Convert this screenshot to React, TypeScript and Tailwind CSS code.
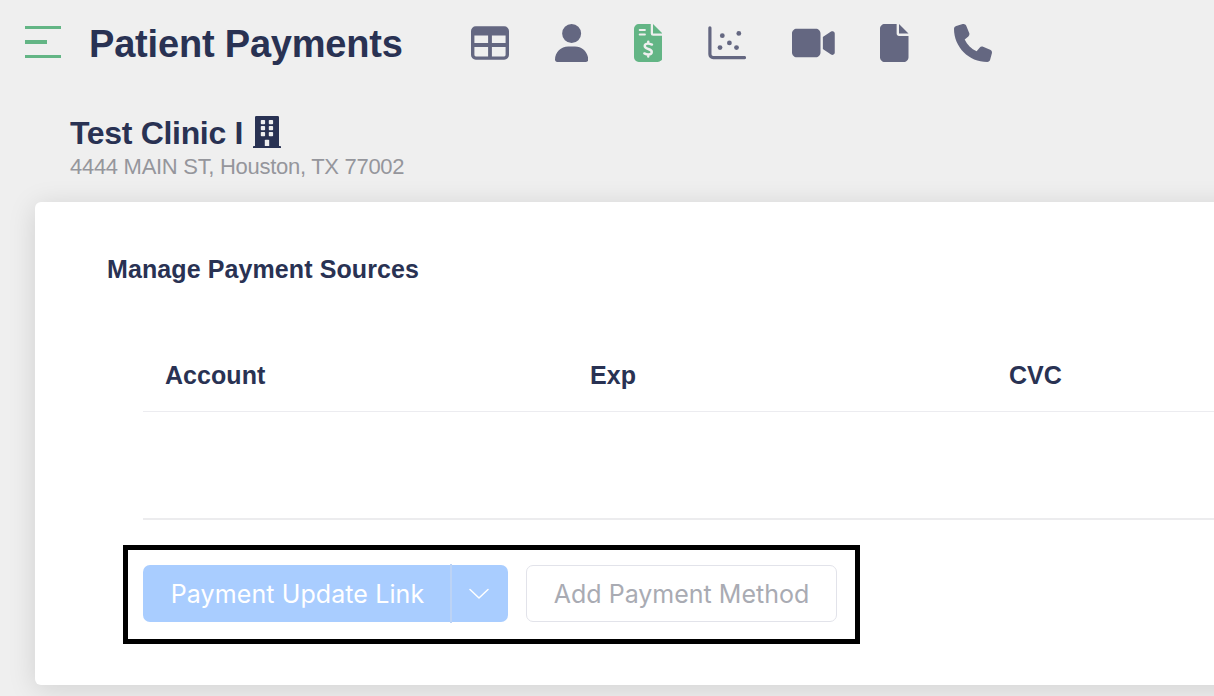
import React from "react";
import { FaUser, FaVideo, FaFile, FaPhone } from "react-icons/fa6";

function TableIcon() {
  return (
    <svg viewBox="0 0 38 38" className="h-[38px] w-[38px]" fill="currentColor">
      <path
        fillRule="evenodd"
        d="M4.750 2.300h28.500A4.750 4.750 0 0 1 38 7v24a4.750 4.750 0 0 1-4.750 4.700H4.750A4.750 4.750 0 0 1 0 31V7a4.750 4.750 0 0 1 4.750-4.700ZM3.400 11.500v7.500h13.700v-7.500ZM20.900 11.500v7.500h13.700v-7.500ZM3.400 23v8a1.500 1.500 0 0 0 1.500 1.400h12.200V23ZM20.900 23v9.400h12.200a1.500 1.500 0 0 0 1.500-1.400v-8Z"
      />
    </svg>
  );
}

function InvoiceIcon() {
  return (
    <svg viewBox="0 0 28.500 38" className="h-[38px] w-[28.500px] text-[#63b585]" fill="currentColor">
      <path d="M4.750 0h12v9.500a2.370 2.370 0 0 0 2.370 2.370h9.380v21.380A4.750 4.750 0 0 1 23.750 38h-19A4.750 4.750 0 0 1 0 33.250V4.750A4.750 4.750 0 0 1 4.750 0Z" />
      <path d="M19 0v9.500h9.500Z" />
      <g fill="none" stroke="#efefef" strokeLinecap="round">
        <path d="M5.700 5.900h5.200M5.700 10.600h5.200" strokeWidth="2" />
        <path
          d="M14.250 17.600v2M14.250 30.500v2M18 20.600c-1.500-.6-2.900-1-4-1-2 0-3.300 1-3.300 2.500 0 1.900 1.800 2.300 3.600 2.900 1.900.6 3.500 1.100 3.500 3 0 1.600-1.400 2.500-3.500 2.500-1.300 0-2.600-.4-4-1.100"
          strokeWidth="2.400"
        />
      </g>
    </svg>
  );
}

function ScatterIcon() {
  return (
    <svg viewBox="0 0 38 38" className="h-[38px] w-[38px]" fill="currentColor">
      <path
        d="M1.900 3.800v26.500a3.300 3.300 0 0 0 3.300 3.300h31.300"
        fill="none"
        stroke="currentColor"
        strokeWidth="3.200"
        strokeLinecap="round"
      />
      <circle cx="14.300" cy="11.700" r="2.400" />
      <circle cx="30.800" cy="9.400" r="2.400" />
      <circle cx="21.400" cy="18.900" r="2.400" />
      <circle cx="12" cy="23.600" r="2.400" />
      <circle cx="28.500" cy="23.600" r="2.400" />
    </svg>
  );
}

function BuildingIcon() {
  return (
    <svg viewBox="0 0 28 32" className="h-8 w-7" fill="currentColor">
      <path d="M3.300 0h21.400a1.300 1.300 0 0 1 1.300 1.300V30h1.200a.8.8 0 0 1 .8.8V32H0v-1.200a.8.8 0 0 1 .8-.8H2V1.300A1.300 1.300 0 0 1 3.300 0Z" />
      <g fill="#efefef">
        <rect x="7.800" y="4" width="4.300" height="4.200" rx=".8" />
        <rect x="15.800" y="4" width="4.300" height="4.200" rx=".8" />
        <rect x="7.800" y="10" width="4.300" height="4.200" rx=".8" />
        <rect x="15.800" y="10" width="4.300" height="4.200" rx=".8" />
        <rect x="7.800" y="16" width="4.300" height="4.200" rx=".8" />
        <rect x="15.800" y="16" width="4.300" height="4.200" rx=".8" />
        <path d="M11.800 24.600a.8.8 0 0 1 .8-.8h2.800a.8.8 0 0 1 .8.8V30h-4.400Z" />
      </g>
    </svg>
  );
}

function Header() {
  return (
    <header className="flex h-[86px] items-center pl-[25px]">
      <button aria-label="Menu" className="-mt-0.5 flex h-8 w-9 flex-col justify-between">
        <span className="h-[3px] w-9 bg-[#63b585]" />
        <span className="h-1 w-[22px] bg-[#63b585]" />
        <span className="h-[3px] w-9 bg-[#63b585]" />
      </button>
      <h1 className="ml-[28px] w-[382px] shrink-0 pt-0.5 text-[38px] leading-none font-bold tracking-[-0.190px] whitespace-nowrap">
        Patient Payments
      </h1>
      <nav className="flex items-center gap-[45.750px] text-[38px] text-[#646781]">
        <TableIcon />
        <FaUser className="w-[33.250px]" />
        <InvoiceIcon />
        <ScatterIcon />
        <FaVideo className="w-[42.750px]" />
        <FaFile className="w-[28.500px]" />
        <FaPhone className="-ml-px" />
      </nav>
    </header>
  );
}

export default function App() {
  return (
    <div
      className="h-[696px] w-[1214px] overflow-hidden bg-[#efefef] text-[#293253]"
      style={{ fontFamily: '"Liberation Sans", Arial, sans-serif' }}
    >
      <Header />
      <section className="h-[116px] pt-[28px] pl-[70px]">
        <h2 className="flex h-9 items-center text-[32px] leading-9 font-bold tracking-[-0.320px] whitespace-nowrap">
          <span className="w-[183px] pt-0.5">Test Clinic I</span>
          <BuildingIcon />
        </h2>
        <p className="mt-1 text-[22px] leading-[26px] tracking-[-0.290px] whitespace-nowrap text-[#95969c]">
          4444 MAIN ST, Houston, TX 77002
        </p>
      </section>
      <main className="ml-[35px] h-[483px] w-[1250px] rounded-md bg-white pt-[51px] shadow-[0_4px_28px_rgba(0,0,0,0.13)]">
        <h3 className="pl-[72px] text-[25px] leading-8 font-bold tracking-[0.100px]">Manage Payment Sources</h3>
        <div className="ml-[108px] flex h-[127px] items-end border-b border-[#ececf0] pb-5 pl-[22px] text-[25px] leading-8 font-bold tracking-[0.050px]">
          <span className="w-[425px]">Account</span>
          <span className="w-[419px]">Exp</span>
          <span>CVC</span>
        </div>
        <div className="ml-[108px] h-[108px] border-b-2 border-[#ececee]" />
        <div
          className="mt-[25px] ml-[88px] flex h-[99px] w-[737px] items-center gap-[18px] border-[5px] border-black pl-[15px] text-[25px]"
          style={{ fontFamily: "Inter, sans-serif" }}
        >
          <div className="-mt-0.5 flex h-[57px] w-[365px] rounded-[7px] bg-[#a9cdff] text-white">
            <button className="w-[307px] pt-0.5 pl-0.5 tracking-[0.100px] whitespace-nowrap">
              Payment Update Link
            </button>
            <span className="-my-px w-0.5 bg-[#bcd3f5]" />
            <button aria-label="More options" className="flex flex-1 items-center justify-center pt-px pr-0.5">
              <svg width="20" height="12" viewBox="0 0 20 12" fill="none" stroke="currentColor" strokeWidth="1.500">
                <path d="M1 1.500 10 10l9-8.500" strokeLinecap="round" strokeLinejoin="round" />
              </svg>
            </button>
          </div>
          <button className="-mt-0.5 h-[57px] w-[311px] rounded-[7px] border border-[#e2e3ea] pt-0.5 whitespace-nowrap text-[#a9abb3]">
            Add Payment Method
          </button>
        </div>
      </main>
    </div>
  );
}
